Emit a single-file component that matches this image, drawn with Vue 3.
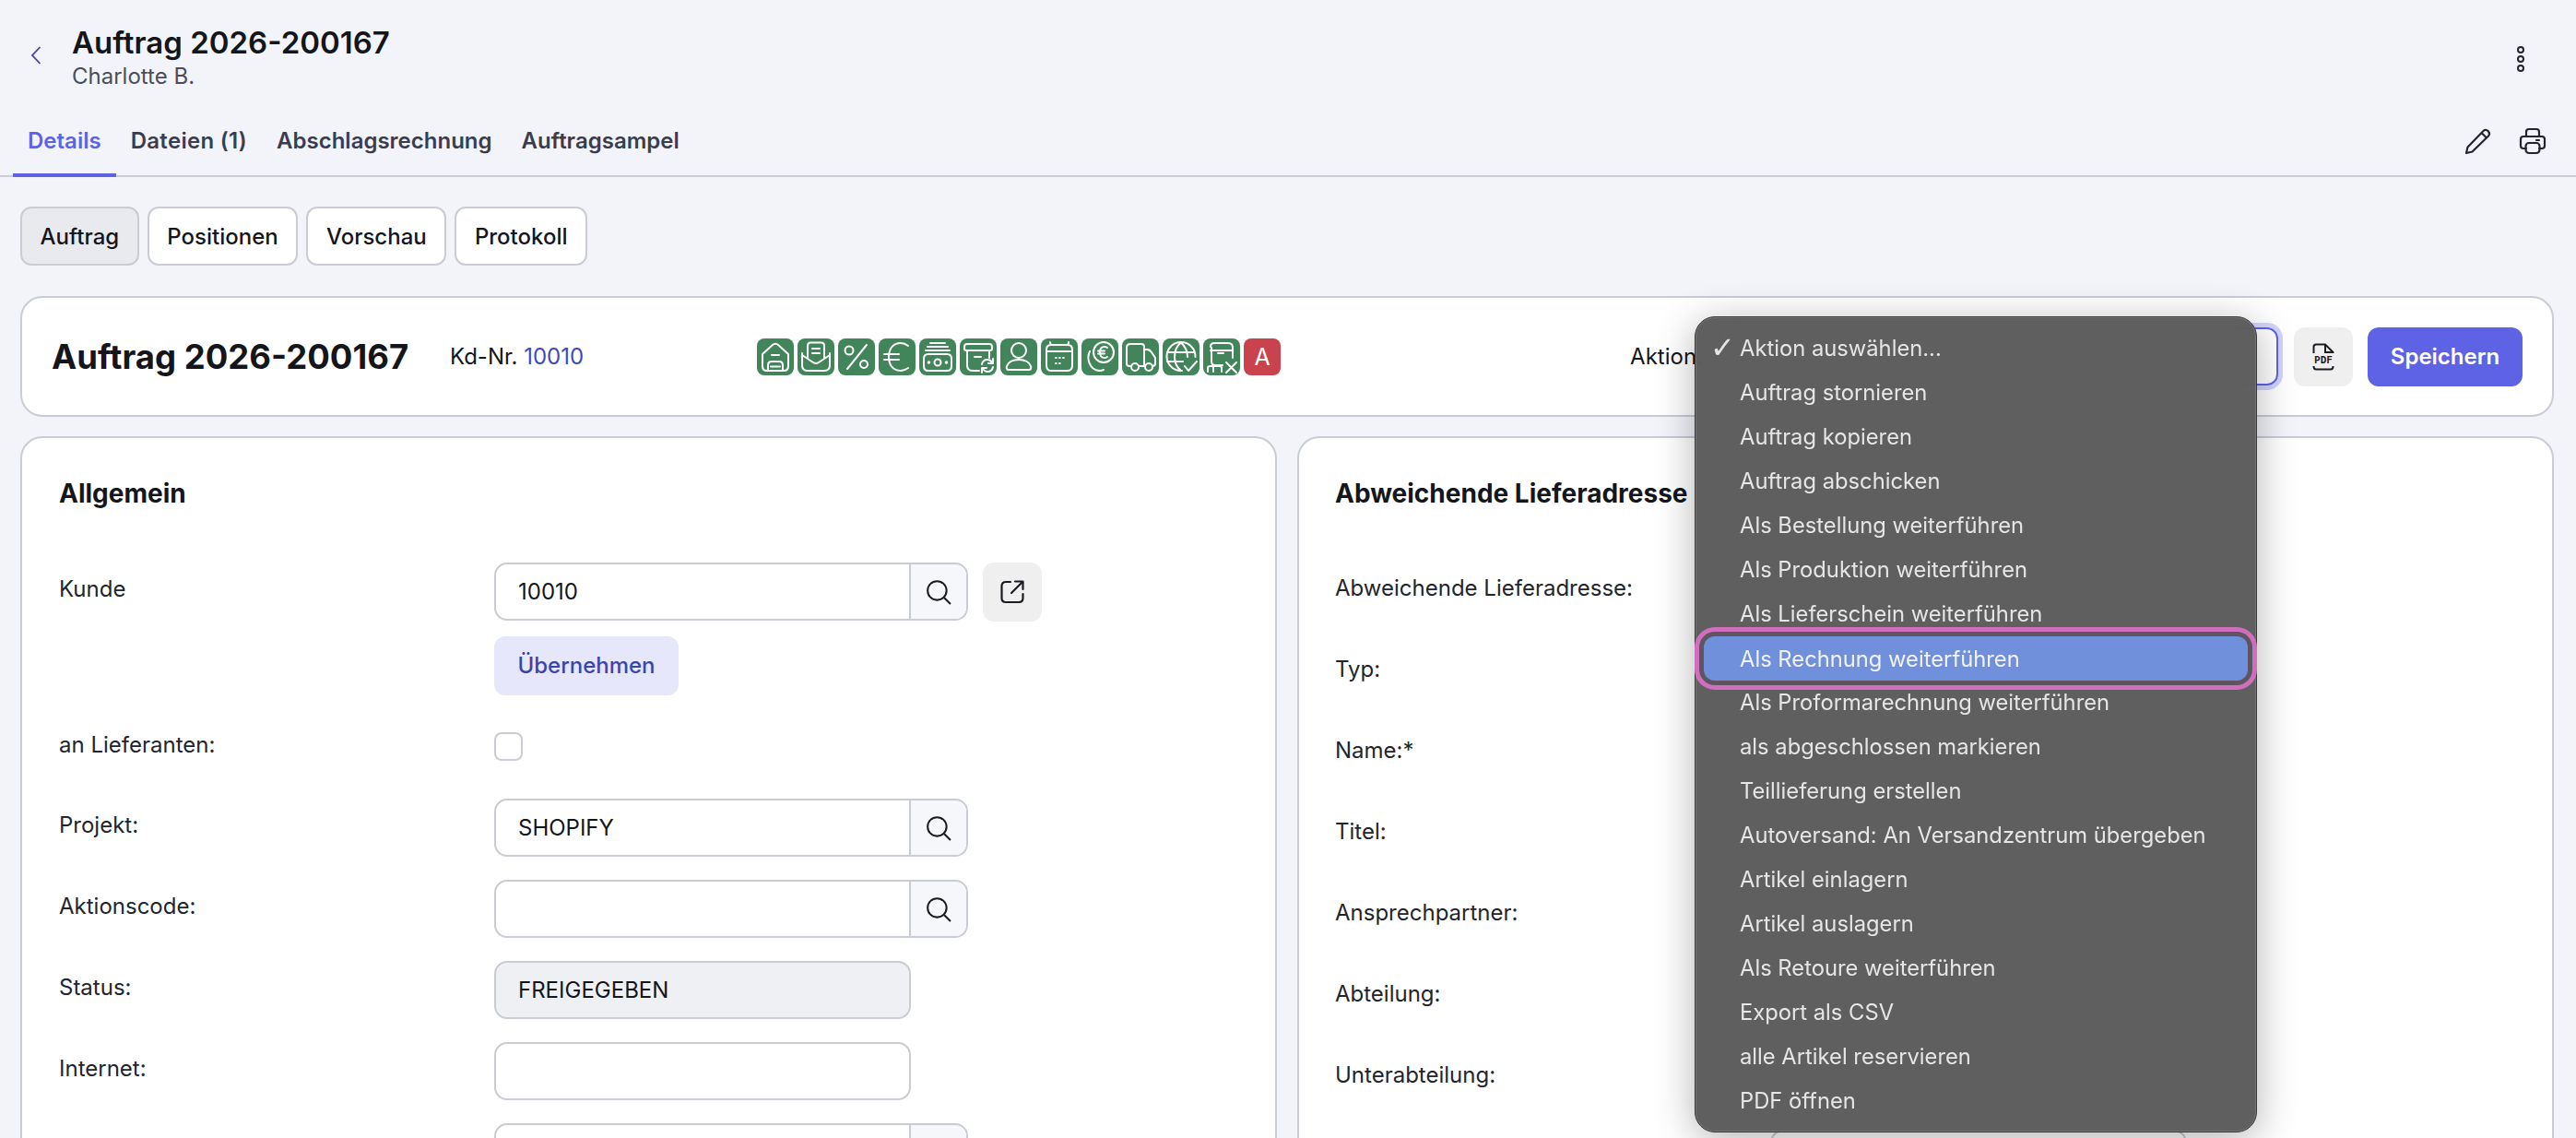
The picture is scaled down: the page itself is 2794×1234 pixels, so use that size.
<template>
  <div class="app">
    <!-- Page header -->
    <header class="head">
      <svg class="back" width="12" height="20" viewBox="0 0 12 20"><path d="M10.5 1 L2 10 L10.5 19" /></svg>
      <div class="head-text">
        <h1>Auftrag 2026-200167</h1>
        <p>Charlotte B.</p>
      </div>
      <svg class="dots" width="12" height="32" viewBox="0 0 12 32">
        <circle cx="6" cy="6" r="3" /><circle cx="6" cy="16" r="3" /><circle cx="6" cy="26" r="3" />
      </svg>
    </header>

    <!-- Main tabs -->
    <nav class="tabs">
      <a v-for="t in tabs" :key="t" class="tab" :class="{ active: t === 'Details' }">{{ t }}</a>
      <div class="tab-tools">
        <svg width="30" height="30" viewBox="0 0 30 30" class="tool">
          <path d="M2 28 L3.5 21.5 L20.5 4 Q23 1.8 25.8 4.2 Q28.2 7 26 9.5 L8.5 26.5 Z M18.5 6 L24 11.5" />
        </svg>
        <svg width="30" height="30" viewBox="0 0 30 30" class="tool">
          <path d="M8 10 V5 Q8 2 11 2 H19 Q22 2 22 5 V10 M8 23 H5 Q2 23 2 20 V13 Q2 10 5 10 H25 Q28 10 28 13 V20 Q28 23 25 23 H22 M19 14 H22" />
          <rect x="7.5" y="17" width="15" height="11" rx="3.5" />
        </svg>
      </div>
    </nav>

    <div class="subtabs">
      <button v-for="s in subtabs" :key="s" class="subtab" :class="{ on: s === 'Auftrag' }">{{ s }}</button>
    </div>

    <!-- Order summary bar -->
    <section class="summary">
      <h2>Auftrag 2026-200167</h2>
      <div class="kd">Kd-Nr. <a>10010</a></div>
      <div class="badges">
        <svg v-for="(d, i) in badgeIcons" :key="i" class="badge" width="40" height="40" viewBox="0 0 40 40">
          <path :d="d" />
        </svg>
        <span class="badge badge-a">A</span>
      </div>
      <div class="actions">
        <label>Aktion:</label>
        <div class="action-select"></div>
        <button class="pdf-btn">
          <svg width="26" height="30" viewBox="0 0 26 30">
            <path class="pdf-line" d="M2.5 11 V4 Q2.5 1.5 5 1.5 H15 L23.5 10 V11 M15 1.5 V10 H23.5 M2.5 25 Q2.5 28.5 5 28.5 H21 Q23.5 28.5 23.5 25" />
            <text x="13" y="22" text-anchor="middle">PDF</text>
          </svg>
        </button>
        <button class="save">Speichern</button>
      </div>
    </section>

    <div class="columns">
      <!-- Left card -->
      <section class="card">
        <h3>Allgemein</h3>
        <div class="row">
          <label>Kunde</label>
          <div class="field">
            <div class="with-tool">
              <div class="input-group">
                <div class="input">10010</div>
                <div class="addon">
                  <svg class="search" width="28" height="28" viewBox="0 0 26 26"><circle cx="11.5" cy="11.5" r="9.5" /><path d="M18.5 18.5 L25 25" /></svg>
                </div>
              </div>
              <button class="open-btn">
                <svg width="26" height="26" viewBox="0 0 26 26"><path d="M11 2 H6 Q1.5 2 1.5 6.5 V19.500 Q1.500 24 6 24 H20 Q24.500 24 24.500 19.500 V15 M12 14 L24 2 M16 1.500 H24.500 V10" /></svg>
              </button>
            </div>
            <button class="apply">Übernehmen</button>
          </div>
        </div>
        <div class="row row-check">
          <label>an Lieferanten:</label>
          <div class="field"><span class="check"></span></div>
        </div>
        <div v-for="r in leftRows" :key="r.label" class="row">
          <label>{{ r.label }}</label>
          <div class="field">
            <div v-if="r.search" class="input-group">
              <div class="input">{{ r.value }}</div>
              <div class="addon">
                <svg class="search" width="28" height="28" viewBox="0 0 26 26"><circle cx="11.5" cy="11.5" r="9.5" /><path d="M18.5 18.5 L25 25" /></svg>
              </div>
            </div>
            <div v-else class="input plain" :class="{ disabled: r.disabled }">{{ r.value }}</div>
          </div>
        </div>
      </section>

      <!-- Right card, mostly under the open menu -->
      <section class="card card-right">
        <h3>Abweichende Lieferadresse</h3>
        <div class="form-right">
          <div class="row row-r">
            <label>Abweichende Lieferadresse:</label>
            <div class="field"><span class="check"></span></div>
          </div>
          <div v-for="l in rightRows" :key="l" class="row row-r">
            <label>{{ l }}</label>
            <div class="field"><div class="input plain"></div></div>
          </div>
        </div>
      </section>
    </div>

    <!-- Native select popup, open over the page -->
    <ul class="menu">
      <li v-for="m in menuItems" :key="m" class="menu-item" :class="{ hl: m === 'Als Rechnung weiterführen' }">
        <span class="tick">{{ m === menuItems[0] ? '✓' : '' }}</span>{{ m }}
      </li>
    </ul>
  </div>
</template>

<script setup>
const tabs = ["Details", "Dateien (1)", "Abschlagsrechnung", "Auftragsampel"];
const subtabs = ["Auftrag", "Positionen", "Vorschau", "Protokoll"];

const leftRows = [
  { label: "Projekt:", value: "SHOPIFY", search: true },
  { label: "Aktionscode:", value: "", search: true },
  { label: "Status:", value: "FREIGEGEBEN", disabled: true },
  { label: "Internet:", value: "" },
  { label: "", value: "", search: true },
];

const rightRows = ["Typ:", "Name:*", "Titel:", "Ansprechpartner:", "Abteilung:", "Unterabteilung:", ""];

const menuItems = [
  "Aktion auswählen...",
  "Auftrag stornieren",
  "Auftrag kopieren",
  "Auftrag abschicken",
  "Als Bestellung weiterführen",
  "Als Produktion weiterführen",
  "Als Lieferschein weiterführen",
  "Als Rechnung weiterführen",
  "Als Proformarechnung weiterführen",
  "als abgeschlossen markieren",
  "Teillieferung erstellen",
  "Autoversand: An Versandzentrum übergeben",
  "Artikel einlagern",
  "Artikel auslagern",
  "Als Retoure weiterführen",
  "Export als CSV",
  "alle Artikel reservieren",
  "PDF öffnen",
];

// circle as a path, so every badge is one d string
const c = (x, y, r) => `M${x - r} ${y}a${r} ${r} 0 1 0 ${r * 2} 0a${r} ${r} 0 1 0 ${-r * 2} 0`;

const badgeIcons = [
  // warehouse
  "M6 17 L17 7 Q20 4.500 23 7 L34 17 V30 Q34 35 29 35 H11 Q6 35 6 30 Z M16 18 H24 M12 35 V29 Q12 25 16 25 H24 Q28 25 28 29 V35 M15 30.500 H25",
  // envelope with letter
  "M11 21 V8 Q11 4.500 14 4.500 H26 Q29 4.500 29 8 V21 M16 11 H24 M16 16 H24 M5 16 V29 Q5 35 11 35 H29 Q35 35 35 29 V16 M5 18 L17 26 Q20 28 23 26 L35 18",
  // percent
  `M31 7 L10 33 ${c(12, 13, 4.5)} ${c(28, 28, 4)}`,
  // euro
  "M32 8 Q28 5 24 5 C15 5 11 12 11 20 C11 28 15 35 24 35 Q28 35 32 32 M6 17 H22 M6 23 H22",
  // money stack
  `M12 5 H28 M9 9 H31 M7 13 H33 M10 17 H30 Q35 17 35 22 V30 Q35 35 30 35 H10 Q5 35 5 30 V22 Q5 17 10 17 Z ${c(20, 26, 3.5)} ${c(10.5, 26, 0.8)} ${c(29.5, 26, 0.8)}`,
  // archive with refresh
  "M8 6 H32 Q35 6 35 9 V11 Q35 13 33 13 H7 Q5 13 5 11 V9 Q5 6 8 6 Z M8 13 V29 Q8 35 14 35 H21 M32 13 V21 M16 20 H23 M24 28 Q25 23 30 23 Q33 23 35 26 M36 22 V27 H31 M36 31 Q35 36 30 36 Q27 36 25 33 M24 37 V32 H29",
  // person
  `${c(20, 13, 8)} M7 30 C9 25 14 23 20 23 C26 23 31 25 33 30 Q34 34 31 34 H9 Q6 34 7 30 Z`,
  // calendar
  "M11 7 H29 Q34 7 34 12 V29 Q34 35 29 35 H11 Q6 35 6 29 V12 Q6 7 11 7 Z M6 14 H34 M10 4 Q10 7 12 7 M30 4 Q30 7 28 7 M16 21 H16.800 M20 21 H20.800 M24 21 H24.800 M16 27 H16.800 M20 27 H20.800",
  // euro coins
  `${c(24, 15, 11)} M28 10 Q26.500 9 25 9 C21 9 20 12.500 20 15 C20 18 21 21 25 21 Q26.500 21 28 20 M18 13.500 H25 M18 16.500 H25 M9 14 C5 22 9 34 19 35 Q22 35 24 34`,
  // truck
  `M10 30 H8 Q5 30 5 27 V10 Q5 6 9 6 H21 Q24 6 24 9 V30 H18 M24 12 H27 Q30 12 32 15 L36 21 V27 Q36 30 33 30 M25 30 H25 ${c(14, 31, 4)} ${c(29, 31, 4)}`,
  // globe with check
  "M21 35 A15.500 15.500 0 1 1 35.500 20 M20 4.500 C14 9 13 15 13 20 C13 25 15 31 20 35 M20 4.500 C25 9 27 15 27 20 M5 15 H34 M5 25 H22 M24 30 L28 35 L37 25",
  // parcel on conveyor, cancelled
  "M11 5 H27 Q32 5 32 10 V21 M8 13 H32 M8 9 Q8 5 12 5 M9 10 V25 Q9 29 13 29 H21 M16 16 H22 M5 36 V32 Q5 30 8 30 H18 Q20 30 20 32 V36 M11 31 V36 M25 26 L36 37 M36 26 L25 37",
];
</script>

<style scoped>
.app {
  position: relative;
  width: 2794px;
  height: 1234px;
  overflow: hidden;
  background: #f3f4fa;
  font-family: Inter, "Liberation Sans", sans-serif;
  color: #14161c;
}

/* header */
.head { display: flex; align-items: flex-start; padding: 26px 54px 0 33px; height: 117px; box-sizing: border-box; }
.back { margin-top: 24px; fill: none; stroke: #4d3aa8; stroke-width: 1.8; }
.head-text { margin-left: 33px; flex: 1; }
.head-text h1 { margin: 0; font-size: 33px; line-height: 40px; font-weight: 600; }
.head-text p { margin: 1px 0 0; font-size: 24px; line-height: 32px; color: #4b4d5c; }
.dots { margin-top: 22px; fill: none; stroke: #23252d; stroke-width: 2; }

/* tabs */
.tabs { display: flex; height: 75px; padding-left: 14px; padding-right: 32px; border-bottom: 2px solid #c9ccd3; box-sizing: border-box; }
.tab { padding: 0 16px; height: 75px; box-sizing: border-box; line-height: 72px; font-size: 24px; font-weight: 600; color: #3b3d4f; border-bottom: 4px solid transparent; }
.tab:nth-child(2) { letter-spacing: 0.3px; }
.tab.active { color: #5e63e6; border-bottom-color: #5e63e6; }
.tab-tools { margin-left: auto; display: flex; gap: 29px; padding-top: 21px; }
.tool { fill: none; stroke: #23252d; stroke-width: 2.2; stroke-linejoin: round; stroke-linecap: round; }

/* sub tabs */
.subtabs { display: flex; gap: 9px; margin: 32px 0 0 22px; }
.subtab { height: 64px; padding: 0 19.6px; border: 2px solid #c9ccd3; border-radius: 12px; background: #fff; font: 500 24px Inter, sans-serif; color: #14161c; }
.subtab.on { background: #e9eaee; }

/* summary bar */
.summary { display: flex; align-items: center; margin: 33px 24px 0 22px; height: 131px; box-sizing: border-box; padding: 0 32px; background: #fff; border: 2px solid #c9ccd3; border-radius: 24px; }
.summary h2 { flex: 0 0 432px; margin: 0; font-size: 36.5px; font-weight: 700; }
.kd { flex: 0 0 333px; font-size: 24px; }
.kd a { color: #3f47c4; }
.badges { display: flex; gap: 4px; }
.badge { flex: none; width: 40px; height: 40px; border-radius: 8px; background: #43855a; fill: none; stroke: #fff; stroke-width: 2; stroke-linecap: round; stroke-linejoin: round; }
.badge-a { background: #c9434e; color: #fff; text-align: center; line-height: 40px; font-size: 25px; }
.actions { margin-left: auto; display: flex; align-items: center; }
.actions label { font-size: 24px; margin-right: 16px; }
.action-select { width: 608px; height: 63px; box-sizing: border-box; border: 2px solid #5e63e6; border-radius: 12px; box-shadow: 0 0 0 5px #d2d4fa; }
.pdf-btn { width: 64px; height: 64px; margin-left: 17px; border: 0; border-radius: 12px; background: #efeff0; padding: 0; display: flex; align-items: center; justify-content: center; }
.pdf-line { fill: none; stroke: #1a1c22; stroke-width: 2; }
.pdf-btn text { font: 700 11px "DejaVu Sans Mono", monospace; fill: #1a1c22; }
.save { width: 168px; height: 64px; margin-left: 16px; border: 0; border-radius: 12px; background: #5e63e6; color: #fff; font: 600 24px Inter, sans-serif; }

/* cards */
.columns { display: grid; grid-template-columns: 1363px 1363px; gap: 22px; margin: 21px 0 0 22px; }
.card { height: 900px; box-sizing: border-box; padding: 44px 40px 0; background: #fff; border: 2px solid #c9ccd3; border-radius: 24px; }
.card-right { padding-left: 39px; }
.card h3 { margin: 0 0 59px; font-size: 28px; line-height: 32px; font-weight: 700; white-space: nowrap; }
.form-right { margin-top: -1px; }

.row { display: grid; grid-template-columns: 472px 1fr; min-height: 63px; margin-bottom: 25px; }
.row-r { grid-template-columns: 472px 1fr; }
.row label { padding-top: 12px; font-size: 24px; line-height: 34px; color: #23252d; }
.row-check { min-height: 62px; }
.row-check .field { padding-top: 15px; }
.row-r:first-child .field { padding-top: 15px; }

.with-tool { display: flex; gap: 16px; }
.input-group { display: flex; width: 514px; height: 63px; box-sizing: border-box; border: 2px solid #c9ccd3; border-radius: 14px; overflow: hidden; }
.input { flex: 1; font-size: 24px; line-height: 59px; padding-left: 24px; box-sizing: border-box; }
.input.plain { width: 452px; height: 63px; border: 2px solid #c9ccd3; border-radius: 14px; background: #fff; }
.input.disabled { background: #eff0f3; }
.addon { width: 60px; display: flex; align-items: center; justify-content: center; background: #f6f7fa; border-left: 2px solid #c9ccd3; }
.search { fill: none; stroke: #1a1c22; stroke-width: 1.9; }
.open-btn { width: 64px; height: 64px; padding: 0; border: 0; border-radius: 12px; background: #efeff0; display: flex; align-items: center; justify-content: center; }
.open-btn svg { fill: none; stroke: #1a1c22; stroke-width: 2.2; stroke-linecap: round; stroke-linejoin: round; }
.apply { display: block; width: 200px; height: 64px; margin-top: 16px; padding: 0 0 2px; border: 0; border-radius: 12px; background: #e6e7fb; color: #3d45a8; font: 500 24px Inter, sans-serif; }
.check { display: block; width: 31px; height: 31px; box-sizing: border-box; border: 2px solid #c9ccd3; border-radius: 8px; }

/* select popup */
.menu {
  position: absolute;
  left: 1838px;
  top: 343px;
  width: 610px;
  height: 885px;
  margin: 0;
  padding: 9px 0 0;
  box-sizing: border-box;
  list-style: none;
  border: 1px solid #383838;
  border-radius: 22px;
  background: rgba(90, 90, 90, 0.97);
  backdrop-filter: blur(16px);
  box-shadow: inset 0 0 0 1px rgba(255, 255, 255, 0.14), 0 8px 44px rgba(0, 0, 0, 0.3);
}
.menu-item { position: relative; display: flex; align-items: center; height: 48px; margin: 0 9px; padding-left: 10px; font-size: 23.75px; color: #e6e6e6; white-space: nowrap; }
.tick { flex: none; width: 32px; margin-left: -3px; font-family: "DejaVu Sans", sans-serif; font-size: 32px; font-weight: 700; line-height: 1; }
.menu-item.hl { top: 1px; background: #7090dc; color: #f1f3fb; border-radius: 12px; box-shadow: 0 0 0 5px #5f5560, 0 0 0 10px #cf6fbe; }
</style>

<style>
html, body { margin: 0; overflow: hidden; }
</style>
